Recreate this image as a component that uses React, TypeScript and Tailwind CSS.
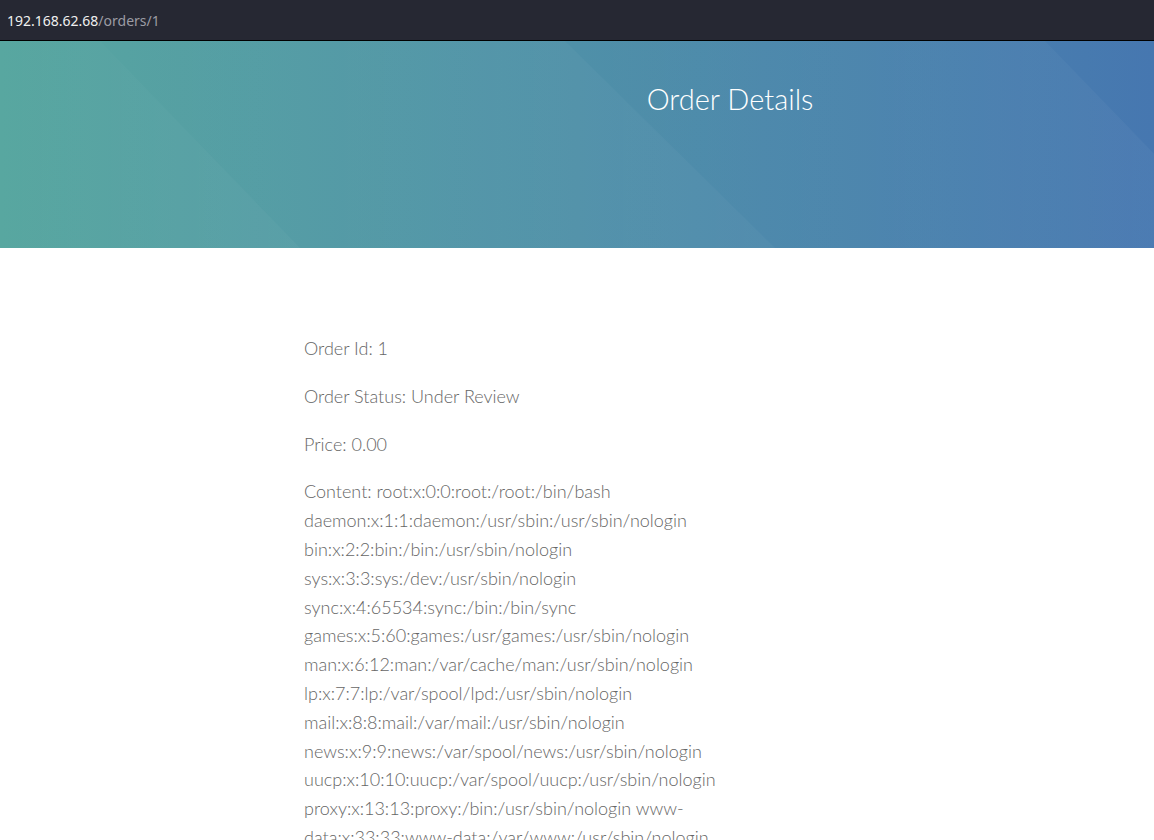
import React from 'react';

const lines = [
  'Content: root:x:0:0:root:/root:/bin/bash',
  'daemon:x:1:1:daemon:/usr/sbin:/usr/sbin/nologin',
  'bin:x:2:2:bin:/bin:/usr/sbin/nologin',
  'sys:x:3:3:sys:/dev:/usr/sbin/nologin',
  'sync:x:4:65534:sync:/bin:/bin/sync',
  'games:x:5:60:games:/usr/games:/usr/sbin/nologin',
  'man:x:6:12:man:/var/cache/man:/usr/sbin/nologin',
  'lp:x:7:7:lp:/var/spool/lpd:/usr/sbin/nologin',
  'mail:x:8:8:mail:/var/mail:/usr/sbin/nologin',
  'news:x:9:9:news:/var/spool/news:/usr/sbin/nologin',
  'uucp:x:10:10:uucp:/var/spool/uucp:/usr/sbin/nologin',
  'proxy:x:13:13:proxy:/bin:/usr/sbin/nologin www-',
  'data:x:33:33:www-data:/var/www:/usr/sbin/nologin',
];

const App: React.FC = () => {
  return (
    <div className="min-h-screen bg-white font-['Lato',sans-serif]">
      {/* URL bar */}
      <div className="h-[41px] bg-[#262833] border-b border-black flex items-center px-[7px] font-['Noto_Sans',sans-serif] text-[14px]">
        <span className="text-[#f0f0f0]">192.168.62.68</span>
        <span className="text-[#9c9ca4]">/orders/1</span>
      </div>

      {/* Header */}
      <header className="relative h-[207px] overflow-hidden bg-gradient-to-r from-[#58a7a0] via-[#4f90a8] to-[#4677b0]">
        <svg className="absolute inset-0 w-full h-full" viewBox="0 0 1154 207" preserveAspectRatio="none">
          <defs>
            <linearGradient id="band" x1="0" y1="0" x2="1" y2="0">
              <stop offset="0" stopColor="#fff" stopOpacity="0" />
              <stop offset="1" stopColor="#fff" stopOpacity="0.04" />
            </linearGradient>
          </defs>
          <polygon points="0,0 100,0 300,207 0,207" fill="url(#band)" />
          <polygon points="100,0 565,0 775,207 300,207" fill="url(#band)" />
          <polygon points="565,0 1045,0 1245,207 775,207" fill="url(#band)" />
        </svg>
        <div className="relative flex justify-center pl-[306px] pt-[43px]">
          <h1 className="text-white text-[29px] font-light leading-none">Order Details</h1>
        </div>
      </header>

      {/* Body */}
      <main className="pl-[304px] pt-[86px] text-[18px] leading-[28.8px] font-light text-[#666]">
        <p className="mb-[19px]">Order Id: 1</p>
        <p className="mb-[19px]">Order Status: Under Review</p>
        <p className="mb-[19px]">Price: 0.00</p>
        <div className="flex flex-col">
          {lines.map((l) => (
            <span key={l}>{l}</span>
          ))}
        </div>
      </main>
    </div>
  );
};

export default App;
